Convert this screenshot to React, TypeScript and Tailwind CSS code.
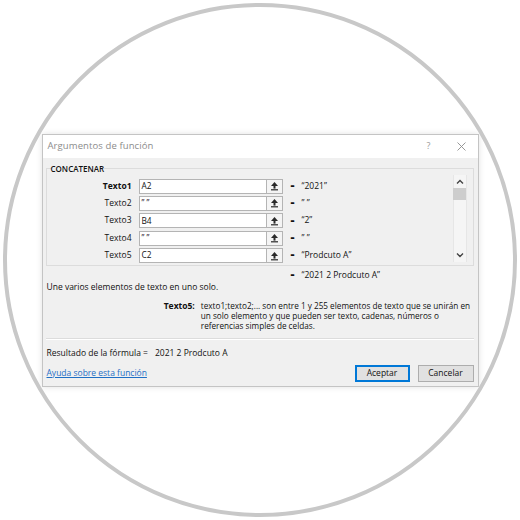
const rows = [
  { label: "Texto1", bold: true, input: "A2", value: "\u201C2021\u201D" },
  { label: "Texto2", bold: false, input: "\u201D \u201D", value: "\u201D \u201D" },
  { label: "Texto3", bold: false, input: "B4", value: "\u201C2\u201D" },
  { label: "Texto4", bold: false, input: "\u201D \u201D", value: "\u201D \u201D" },
  { label: "Texto5", bold: false, input: "C2", value: "\u201CProdcuto A\u201D" },
];

function UploadIcon() {
  return (
    <svg width="9" height="10" viewBox="0 0 9 10">
      <path d="M4.5 1 L8 5 H1 Z" fill="#2a2a2a" />
      <rect x="3.5" y="5" width="2" height="2.6" fill="#2a2a2a" />
      <rect x="1" y="8.2" width="7" height="1.2" fill="#2a2a2a" />
    </svg>
  );
}

function Chevron({ up }: { up: boolean }) {
  return (
    <svg width="8" height="6" viewBox="0 0 8 6">
      <path
        d={up ? "M1 4.5 L4 1.5 L7 4.5" : "M1 1.5 L4 4.5 L7 1.5"}
        fill="none"
        stroke="#444"
        strokeWidth="1.4"
      />
    </svg>
  );
}

export default function App() {
  return (
    <div className="w-[520px] h-[520px] bg-white flex items-center justify-center font-['Open_Sans',sans-serif] text-[#111]">
      <div className="w-[514px] h-[514px] rounded-full border-[4px] border-[#c8c8c8] overflow-hidden bg-white flex items-center justify-center">
        {/* dialog */}
        <div className="w-[437px] h-[253px] shrink-0 bg-[#f0f0f0] border border-[#c4c4c4] shadow-[0_0_6px_rgba(0,0,0,0.12)] flex flex-col">
          {/* title bar */}
          <div className="h-[23px] bg-white flex items-center pl-[5px] pr-[12px] shrink-0">
            <span className="text-[9.5px] text-[#8c8c8c] tracking-[0.1px]">Argumentos de función</span>
            <span className="ml-auto text-[9px] text-[#9a9a9a]">?</span>
            <svg className="ml-[26px]" width="9" height="9" viewBox="0 0 9 9">
              <path d="M0.5 0.5 L8.5 8.5 M8.5 0.5 L0.5 8.5" stroke="#8c8c8c" strokeWidth="0.9" />
            </svg>
          </div>

          <div className="flex flex-col pl-[3px] pr-[4px] pt-[6px]">
            {/* group box */}
            <fieldset className="border border-[#dcdcdc] h-[102px] flex">
              <legend className="text-[8px] leading-[10px] font-semibold ml-[4px] text-[#111]">CONCATENAR</legend>
              <div className="flex-1 flex flex-col gap-y-[2.4px] pt-[5px]">
                {rows.map((r) => (
                  <div key={r.label} className="flex items-center h-[15px]">
                    <span
                      className={
                        "w-[85px] text-right text-[8.5px] " + (r.bold ? "font-bold" : "font-normal")
                      }
                    >
                      {r.label}
                    </span>
                    <div className="ml-[7px] w-[144px] h-[15px] bg-white border border-[#b4b4b4] flex items-center">
                      <span className="flex-1 pl-[2px] text-[8.3px]">{r.input}</span>
                      <div className="w-[16px] h-[13px] border-l border-[#b4b4b4] bg-[#f4f4f4] flex items-center justify-center">
                        <UploadIcon />
                      </div>
                    </div>
                    <span className="ml-[8px] text-[7px] font-bold">=</span>
                    <span className="ml-[7px] text-[8.5px]">{r.value}</span>
                  </div>
                ))}
              </div>
              {/* scrollbar */}
              <div className="w-[14px] mr-[6px] mt-[1px] mb-[1px] bg-[#f5f5f5] border-x border-[#e6e6e6] flex flex-col items-center">
                <div className="h-[12px] flex items-center justify-center mt-[1px]">
                  <Chevron up />
                </div>
                <div className="w-[13px] h-[12px] bg-[#cdcdcd]" />
                <div className="mt-auto h-[12px] flex items-center justify-center mb-[1px]">
                  <Chevron up={false} />
                </div>
              </div>
            </fieldset>

            {/* result */}
            <div className="h-[12px] mt-[4px] flex items-center pl-[245px] text-[8.5px]">
              <span className="text-[7px] font-bold">=</span>
              <span className="ml-[7px]">{"\u201C2021 2 Prodcuto A\u201D"}</span>
            </div>
            <div className="h-[12px] flex items-center pl-[1px] text-[8.5px]">
              Une varios elementos de texto en uno solo.
            </div>

            {/* argument help */}
            <div className="flex mt-[7px] text-[8.5px] leading-[10px]">
              <span className="w-[150px] text-right font-bold">Texto5:</span>
              <p className="ml-[6px] w-[274px] text-[8.2px]">
                texto1;texto2;... son entre 1 y 255 elementos de texto que se unirán en un solo elemento y que pueden ser texto, cadenas, números o referencias simples de celdas.
              </p>
            </div>

            <div className="mt-[7px] border-t border-[#dcdcdc] border-b border-b-white" />

            {/* formula result */}
            <div className="h-[12px] mt-[8px] flex items-center pl-[1px] text-[8.5px]">
              <span>Resultado de la fórmula =</span>
              <span className="ml-[7px]">2021 2 Prodcuto A</span>
            </div>

            {/* footer */}
            <div className="flex items-center mt-[5px]">
              <a className="pl-[1px] text-[8.5px] text-[#1f6fc5] underline">Ayuda sobre esta función</a>
              <button className="ml-auto w-[55px] h-[17px] bg-[#e1e1e1] border-2 border-[#0078d7] text-[8.5px]">
                Aceptar
              </button>
              <button className="ml-[8px] w-[56px] h-[17px] bg-[#e1e1e1] border border-[#adadad] text-[8.5px]">
                Cancelar
              </button>
            </div>
          </div>
        </div>
      </div>
    </div>
  );
}
